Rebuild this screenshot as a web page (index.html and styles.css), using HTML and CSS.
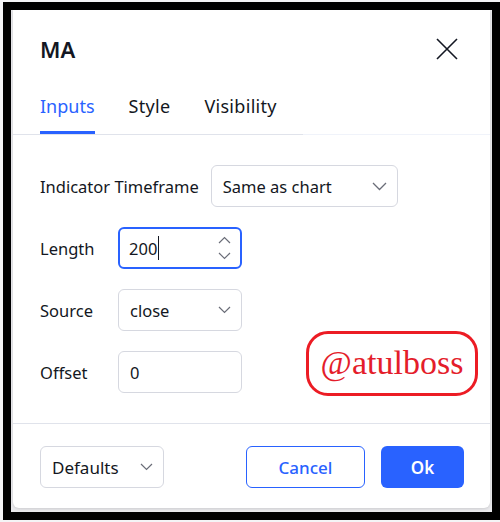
FILE: index.html
```html
<!DOCTYPE html>
<html>
<head>
<meta charset="utf-8">
<link rel="stylesheet" href="styles.css">
</head>
<body>
<div class="frame">
  <div class="stage">
    <div class="dialog">
      <div class="header">
        <div class="title">MA</div>
        <svg class="close" width="22" height="22" viewBox="0 0 22 22"><path d="M1 1 L21 21 M21 1 L1 21" stroke="#131722" stroke-width="1.6" fill="none"/></svg>
      </div>
      <div class="tabs-wrap">
        <div class="tabs">
          <div class="tab active">Inputs</div>
          <div class="tab">Style</div>
          <div class="tab">Visibility</div>
        </div>
      </div>
      <div class="body">
        <div class="row">
          <div class="label">Indicator Timeframe</div>
          <div class="control select wide">
            <span>Same as chart</span>
            <svg class="chev" width="15" height="9" viewBox="0 0 15 9"><path d="M1 1 L7.5 7.5 L14 1" stroke="#6a6d78" stroke-width="1.3" fill="none"/></svg>
          </div>
        </div>
        <div class="row">
          <div class="label fixed">Length</div>
          <div class="control focus">
            <span class="value">200<span class="caret"></span></span>
            <div class="spin">
              <svg width="13" height="8" viewBox="0 0 13 8"><path d="M1 7 L6.5 1.5 L12 7" stroke="#6a6d78" stroke-width="1.2" fill="none"/></svg>
              <svg width="13" height="8" viewBox="0 0 13 8"><path d="M1 1 L6.5 6.5 L12 1" stroke="#6a6d78" stroke-width="1.2" fill="none"/></svg>
            </div>
          </div>
        </div>
        <div class="row">
          <div class="label fixed">Source</div>
          <div class="control select">
            <span>close</span>
            <svg class="chev" width="13" height="8" viewBox="0 0 13 8"><path d="M1 1 L6.5 6.5 L12 1" stroke="#6a6d78" stroke-width="1.2" fill="none"/></svg>
          </div>
        </div>
        <div class="row">
          <div class="label fixed">Offset</div>
          <div class="control">
            <span>0</span>
          </div>
        </div>
      </div>
      <div class="footer">
        <div class="control select defaults">
          <span>Defaults</span>
          <svg class="chev" width="13" height="8" viewBox="0 0 13 8"><path d="M1 1 L6.5 6.5 L12 1" stroke="#6a6d78" stroke-width="1.2" fill="none"/></svg>
        </div>
        <div class="actions">
          <div class="btn cancel">Cancel</div>
          <div class="btn ok">Ok</div>
        </div>
      </div>
      <div class="watermark">@atulboss</div>
    </div>
  </div>
</div>
</body>
</html>
```

FILE: styles.css
```css
html, body {
  margin: 0;
  padding: 0;
  background: #f4f4f6;
}
body {
  width: 500px;
  height: 522px;
  overflow: hidden;
  font-family: "Noto Sans", "Open Sans", sans-serif;
  color: #131722;
}
.frame {
  margin: 2px 0 0 3px;
  width: 481px;
  height: 502px;
  border: 8px solid #000;
}
.stage {
  height: 502px;
  background: #e9e9ec;
  padding: 0 2px 4px 2px;
  box-sizing: border-box;
}
.dialog {
  position: relative;
  height: 498px;
  background: #fff;
  border-radius: 0 0 6px 6px;
  box-shadow: 0 1px 3px rgba(0,0,0,0.12);
  display: flex;
  flex-direction: column;
}
.header {
  display: flex;
  align-items: center;
  justify-content: space-between;
  padding: 25px 32px 0 27px;
  height: 28px;
}
.title {
  font-size: 22px;
  font-weight: 600;
  line-height: 28px;
}
.close {
  display: block;
}
.tabs-wrap {
  margin-top: 31px;
  border-bottom: 1px solid #f0f3fa;
}
.tabs {
  display: inline-flex;
  gap: 34px;
  padding: 0 26px 0 27px;
  border-bottom: 1px solid #e0e3eb;
  margin-bottom: -1px;
}
.tab {
  font-size: 18px;
  line-height: 24px;
  padding-bottom: 13px;
  border-bottom: 3px solid transparent;
  letter-spacing: 0.3px;
}
.tab.active {
  color: #2962ff;
  border-bottom-color: #2962ff;
  letter-spacing: 0;
}
.body {
  padding: 30px 27px;
  display: flex;
  flex-direction: column;
  gap: 20px;
}
.row {
  display: flex;
  align-items: center;
  gap: 12px;
}
.label {
  font-size: 16.5px;
}
.label.fixed {
  width: 66px;
}
.control {
  box-sizing: border-box;
  height: 42px;
  width: 124px;
  border: 1px solid #d6d8e0;
  border-radius: 6px;
  display: flex;
  align-items: center;
  justify-content: space-between;
  padding: 0 10px 0 11px;
  font-size: 16.5px;
}
.control.wide {
  width: 187px;
}
.control.focus {
  border: 2px solid #2962ff;
  padding: 0 9px 0 9px;
}
.value {
  display: flex;
  align-items: center;
}
.caret {
  display: inline-block;
  width: 1px;
  height: 24px;
  background: #131722;
  margin-left: 1px;
}
.spin {
  display: flex;
  flex-direction: column;
  gap: 8px;
}
.spin svg, .chev {
  display: block;
}
.footer {
  border-top: 1px solid #e0e3eb;
  padding: 22px 26px 20px 27px;
  display: flex;
  justify-content: space-between;
  align-items: center;
}
.defaults {
  font-size: 17px;
}
.actions {
  display: flex;
  gap: 16px;
}
.btn {
  box-sizing: border-box;
  height: 42px;
  border-radius: 6px;
  display: flex;
  align-items: center;
  justify-content: center;
  font-size: 17px;
  font-weight: 600;
}
.cancel {
  width: 119px;
  border: 1px solid #2962ff;
  color: #2962ff;
  background: #fff;
  font-weight: 500;
}
.ok {
  width: 83px;
  background: #2962ff;
  color: #fff;
}
.watermark {
  position: absolute;
  left: 293px;
  top: 321px;
  width: 172px;
  height: 65px;
  box-sizing: border-box;
  border: 3px solid #ec1c24;
  border-radius: 22px;
  display: flex;
  align-items: center;
  justify-content: center;
  font-family: "Liberation Serif", serif;
  font-size: 34px;
  color: #e41d2b;
  padding-bottom: 2px;
}
```
